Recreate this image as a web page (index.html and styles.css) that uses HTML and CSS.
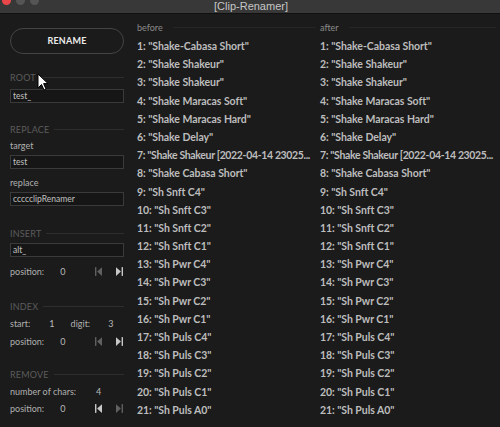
FILE: index.html
```html
<!DOCTYPE html>
<html>
<head>
<meta charset="utf-8">
<link rel="stylesheet" href="styles.css">
</head>
<body>
<div class="titlebar">
  <div class="lights"><span class="dot red"></span><span class="dot"></span><span class="dot"></span></div>
  <div class="title">[Clip-Renamer]</div>
</div>
<div class="main">
  <div class="panel">
    <div class="btn">RENAME</div>

    <div class="sec s-root"><span>ROOT</span><i></i></div>
    <div class="input g5">test_</div>

    <div class="sec s-replace"><span>REPLACE</span><i></i></div>
    <div class="lbl g3">target</div>
    <div class="input g2">test</div>
    <div class="lbl g7">replace</div>
    <div class="input g2">ccccclipRenamer</div>

    <div class="sec s-insert"><span>INSERT</span><i></i></div>
    <div class="input g3">alt_</div>
    <div class="row g7"><span class="k">position:</span><span class="v v1">0</span>
      <span class="icons">
        <svg class="ic dim" viewBox="0 0 8 10"><rect x="0" y="0" width="1.6" height="10"/><path d="M8 0 L2.4 5 L8 10 Z"/></svg>
        <svg class="ic" viewBox="0 0 8 10"><path d="M0 0 L5.6 5 L0 10 Z"/><rect x="6.4" y="0" width="1.6" height="10"/></svg>
      </span>
    </div>

    <div class="sec s-index"><span>INDEX</span><i></i></div>
    <div class="row g3"><span class="k">start:</span><span class="v v2">1</span><span class="k k2">digit:</span><span class="v v3">3</span></div>
    <div class="row g4"><span class="k">position:</span><span class="v v1">0</span>
      <span class="icons">
        <svg class="ic dim" viewBox="0 0 8 10"><rect x="0" y="0" width="1.6" height="10"/><path d="M8 0 L2.4 5 L8 10 Z"/></svg>
        <svg class="ic" viewBox="0 0 8 10"><path d="M0 0 L5.6 5 L0 10 Z"/><rect x="6.4" y="0" width="1.6" height="10"/></svg>
      </span>
    </div>

    <div class="sec s-remove"><span>REMOVE</span><i></i></div>
    <div class="row g3"><span class="k">number of chars:</span><span class="v v4">4</span></div>
    <div class="row g3"><span class="k">position:</span><span class="v v1">0</span>
      <span class="icons">
        <svg class="ic" viewBox="0 0 8 10"><rect x="0" y="0" width="1.6" height="10"/><path d="M8 0 L2.4 5 L8 10 Z"/></svg>
        <svg class="ic dim" viewBox="0 0 8 10"><path d="M0 0 L5.6 5 L0 10 Z"/><rect x="6.4" y="0" width="1.6" height="10"/></svg>
      </span>
    </div>
  </div>

  <div class="col before">
    <div class="head"><span>before</span><i></i></div>
    <div class="item">1: "Shake-Cabasa Short"</div>
    <div class="item">2: "Shake Shakeur"</div>
    <div class="item">3: "Shake Shakeur"</div>
    <div class="item">4: "Shake Maracas Soft"</div>
    <div class="item">5: "Shake Maracas Hard"</div>
    <div class="item">6: "Shake Delay"</div>
    <div class="item tight">7: "Shake Shakeur [2022-04-14 23025...</div>
    <div class="item">8: "Shake Cabasa Short"</div>
    <div class="item">9: "Sh Snft C4"</div>
    <div class="item">10: "Sh Snft C3"</div>
    <div class="item">11: "Sh Snft C2"</div>
    <div class="item">12: "Sh Snft C1"</div>
    <div class="item">13: "Sh Pwr C4"</div>
    <div class="item">14: "Sh Pwr C3"</div>
    <div class="item">15: "Sh Pwr C2"</div>
    <div class="item">16: "Sh Pwr C1"</div>
    <div class="item">17: "Sh Puls C4"</div>
    <div class="item">18: "Sh Puls C3"</div>
    <div class="item">19: "Sh Puls C2"</div>
    <div class="item">20: "Sh Puls C1"</div>
    <div class="item">21: "Sh Puls A0"</div>
  </div>

  <div class="col after">
    <div class="head"><span>after</span><i></i></div>
    <div class="item">1: "Shake-Cabasa Short"</div>
    <div class="item">2: "Shake Shakeur"</div>
    <div class="item">3: "Shake Shakeur"</div>
    <div class="item">4: "Shake Maracas Soft"</div>
    <div class="item">5: "Shake Maracas Hard"</div>
    <div class="item">6: "Shake Delay"</div>
    <div class="item tight">7: "Shake Shakeur [2022-04-14 23025...</div>
    <div class="item">8: "Shake Cabasa Short"</div>
    <div class="item">9: "Sh Snft C4"</div>
    <div class="item">10: "Sh Snft C3"</div>
    <div class="item">11: "Sh Snft C2"</div>
    <div class="item">12: "Sh Snft C1"</div>
    <div class="item">13: "Sh Pwr C4"</div>
    <div class="item">14: "Sh Pwr C3"</div>
    <div class="item">15: "Sh Pwr C2"</div>
    <div class="item">16: "Sh Pwr C1"</div>
    <div class="item">17: "Sh Puls C4"</div>
    <div class="item">18: "Sh Puls C3"</div>
    <div class="item">19: "Sh Puls C2"</div>
    <div class="item">20: "Sh Puls C1"</div>
    <div class="item">21: "Sh Puls A0"</div>
  </div>
</div>
<svg class="cursor" viewBox="0 0 12 18" width="12" height="18"><path d="M1 1 L1 15 L4.5 11.5 L7 17 L9 16 L6.6 10.6 L11 10.6 Z" fill="#fff" stroke="#000" stroke-width="1" stroke-linejoin="round"/></svg>
</body>
</html>
```

FILE: styles.css
```css
html, body {
  margin: 0;
  padding: 0;
}
body {
  width: 500px;
  height: 427px;
  overflow: hidden;
  background: #1b1b1b;
  font-family: Lato, "Noto Sans", sans-serif;
  color: #b8b8b8;
  position: relative;
}
.titlebar {
  height: 13px;
  background: #383838;
  border-bottom: 1px solid #111;
  position: relative;
}
.lights {
  position: absolute;
  left: 2px;
  top: -4px;
  display: flex;
  gap: 5px;
}
.dot {
  width: 9px;
  height: 9px;
  border-radius: 50%;
  background: #555;
}
.dot.red { background: #e9474a; }
.title {
  text-align: center;
  font-family: "Liberation Sans", Arial, sans-serif;
  font-size: 11px;
  line-height: 12px;
  color: #c6c6c6;
  padding-left: 2px;
}
.main {
  display: flex;
}
.panel {
  width: 114px;
  padding-left: 10px;
  margin-right: 13px;
  display: flex;
  flex-direction: column;
}
.btn {
  margin-top: 14px;
  height: 24px;
  border: 1px solid #444;
  border-radius: 13px;
  text-align: center;
  line-height: 24px;
  font-size: 9px;
  font-weight: 700;
  color: #ececec;
  letter-spacing: 0.2px;
}
.sec {
  height: 14px;
  display: flex;
  align-items: center;
  font-size: 9px;
  color: #5c5c5c;
  letter-spacing: 0.2px;
}
.sec i {
  flex: 1;
  height: 1px;
  background: #2e2e2e;
  margin-left: 5px;
}
.s-root { margin-top: 16px; }
.s-replace { margin-top: 19px; }
.s-insert { margin-top: 20px; }
.s-index { margin-top: 21px; }
.s-remove { margin-top: 19px; }
.input {
  height: 12px;
  border: 1px solid #3a3a3a;
  background: #161616;
  font-size: 8.5px;
  line-height: 12px;
  padding-left: 2px;
  color: #c0c0c0;
}
.lbl {
  height: 14px;
  line-height: 14px;
  font-size: 9px;
  color: #b0b0b0;
}
.g2 { margin-top: 2px; }
.g3 { margin-top: 3px; }
.g4 { margin-top: 4px; }
.g5 { margin-top: 5px; }
.g7 { margin-top: 7px; }
.row {
  height: 14px;
  display: flex;
  align-items: center;
  font-size: 9px;
  color: #b0b0b0;
}
.k { white-space: nowrap; }
.v { color: #b8b8b8; }
.v1 { margin-left: 16px; }
.v2 { margin-left: 19px; }
.k2 { margin-left: 16px; }
.v3 { margin-left: 18px; }
.v4 { margin-left: 20px; }
.icons {
  margin-left: auto;
  display: flex;
  gap: 14px;
  margin-right: 1px;
}
.ic {
  width: 7px;
  height: 9px;
  fill: #c8c8c8;
}
.ic.dim { fill: #606060; }
.col {
  display: flex;
  flex-direction: column;
  font-size: 10.5px;
}
.before { width: 179px; margin-right: 4px; }
.after { width: 176px; }
.head {
  height: 12px;
  margin-top: 7px;
  display: flex;
  align-items: center;
  font-size: 9px;
  color: #8a8a8a;
  margin-bottom: 4px;
}
.head i {
  flex: 1;
  height: 1px;
  background: #262626;
  margin-left: 10px;
}
.item {
  height: 18.2px;
  line-height: 18.2px;
  white-space: nowrap;
  color: #bdbdbd;
  font-weight: 700;
  letter-spacing: -0.05px;
}
.item.tight {
  letter-spacing: -0.35px;
}
.cursor {
  position: absolute;
  left: 37px;
  top: 73px;
}
```
